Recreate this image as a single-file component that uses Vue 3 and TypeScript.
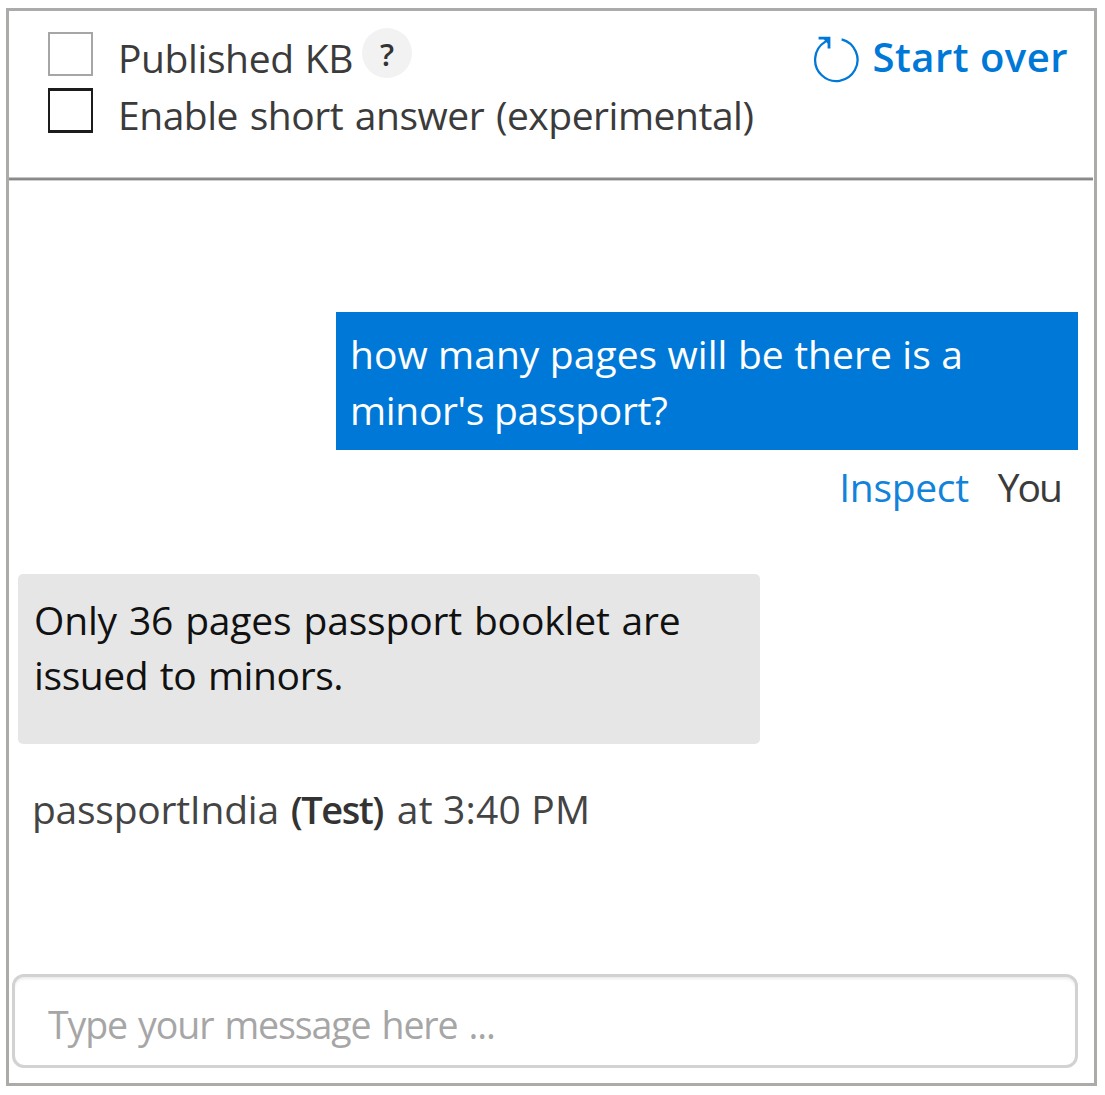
<script setup lang="ts">
import { ref } from 'vue'

interface Option {
  id: string
  label: string
  help: boolean
  muted: boolean
}

const options: Option[] = [
  { id: 'published', label: 'Published KB', help: true, muted: true },
  { id: 'short', label: 'Enable short answer (experimental)', help: false, muted: false },
]
const draft = ref('')
</script>

<template>
  <main class="panel">
    <header class="header">
      <div class="options">
        <div v-for="o in options" :key="o.id" class="option" :class="{ muted: o.muted }">
          <span class="box" role="checkbox" aria-checked="false"></span>
          <span class="label" :class="o.id">{{ o.label }}</span>
          <span v-if="o.help" class="help">?</span>
        </div>
      </div>
      <a class="restart">
        <svg class="restart-icon" width="48" height="48" viewBox="0 0 48 48" fill="none" stroke="#0078d7">
          <path d="M29.6 4.3A21.2 21.2 0 1 1 13 6.9L17 3.5" stroke-width="2.3" />
          <path d="M6.6 3.2H17V13.4" stroke-width="2.8" />
          <path d="M11 3H17V9.5L14 7Z" fill="#0078d7" stroke="none" />
        </svg>
        <span class="restart-text">Start over</span>
      </a>
    </header>
    <div class="divider"></div>

    <section class="chat">
      <div class="bubble user">
        <div class="u1">how many pages will be there is a</div>
        <div class="u2">minor's passport?</div>
      </div>
      <div class="meta user-meta"><a class="inspect">Inspect</a><span class="you">You</span></div>
      <div class="bubble bot">
        <div class="b1">Only 36 pages passport booklet are</div>
        <div class="b2">issued to minors.</div>
      </div>
      <div class="meta bot-meta">
        <span class="name">passportIndia</span><span class="test">(Test)</span><span class="time">at 3:40 PM</span>
      </div>
    </section>

    <input v-model="draft" class="message" placeholder="Type your message here ..." />
  </main>
</template>

<style scoped>
.panel {
  box-sizing: border-box;
  width: 1091px;
  height: 1078px;
  margin: 8px 0 0 6px;
  border: 3px solid #adaaaa;
  background: #fff;
  display: flex;
  flex-direction: column;
  font: 39px/56px "Open Sans", "Noto Sans", sans-serif;
  color: #3b3b3b;
  white-space: nowrap;
}
.header {
  height: 166px;
  display: flex;
  justify-content: space-between;
  align-items: flex-start;
  flex: none;
}
.options {
  padding: 19px 0 0 39px;
}
.option {
  display: flex;
  align-items: flex-start;
  height: 57px;
}
.box {
  box-sizing: border-box;
  width: 45px;
  height: 45px;
  margin: 1px 25px 0 0;
  border: solid #1c1c1c;
  border-width: 3px 2px;
}
.muted .box {
  border: 2px solid #a6a6a6;
  margin-top: 2px;
  height: 44px;
}
.label.published {
  letter-spacing: -0.4px;
  word-spacing: 1.5px;
}
.label.short {
  letter-spacing: -0.47px;
  word-spacing: 2px;
}
.help {
  width: 50px;
  height: 50px;
  margin: -2px 0 0 9px;
  border-radius: 50%;
  background: #f2f2f2;
  color: #333;
  font-size: 31px;
  line-height: 53px;
  font-weight: 600;
  text-align: center;
}
.restart {
  display: flex;
  align-items: flex-start;
  color: #0078d7;
  padding: 17px 26px 0 0;
}
.restart-icon {
  margin: 7px 12px 0 0;
}
.restart-text {
  font-size: 40px;
  line-height: 57px;
  font-weight: 600;
  letter-spacing: 0.5px;
}
.divider {
  flex: none;
  width: 1084px;
  height: 4px;
  background: linear-gradient(#c4c4c4 25%, #8e8e8e 25% 50%, #858585 50% 75%, #cfcfcf 75%);
}
.chat {
  height: 793px;
  flex: none;
  display: flex;
  flex-direction: column;
  padding-top: 131px;
  box-sizing: border-box;
}
.bubble {
  box-sizing: border-box;
  width: 742px;
  line-height: 55px;
}
.user {
  height: 138px;
  align-self: flex-end;
  margin-right: 16px;
  padding: 14px 0 0 14px;
  line-height: 56px;
  background: #0078d7;
  color: #fff;
}
.u1 {
  letter-spacing: 0.02px;
  word-spacing: 0.3px;
}
.u2 {
  letter-spacing: -0.33px;
}
.meta {
  display: flex;
}
.user-meta {
  justify-content: flex-end;
  padding: 9px 33px 0 0;
}
.inspect {
  color: #1283da;
  letter-spacing: -0.3px;
  margin-right: 29px;
}
.you {
  letter-spacing: -2px;
}
.bot {
  height: 170px;
  margin: 59px 0 0 9px;
  padding: 18px 0 0 16px;
  border-radius: 5px;
  background: #e6e6e6;
  color: #111;
}
.b1 {
  letter-spacing: -0.17px;
  word-spacing: 2px;
}
.b2 {
  letter-spacing: -0.4px;
  word-spacing: 1.8px;
}
.bot-meta {
  padding: 37px 0 0 23px;
  color: #444;
}
.name {
  letter-spacing: -0.25px;
}
.test {
  margin-left: 12px;
  font-size: 38px;
  font-weight: 600;
  letter-spacing: -1.5px;
  color: #333;
}
.time {
  margin-left: 14px;
  letter-spacing: 0.2px;
}
.message {
  box-sizing: border-box;
  flex: none;
  width: 1066px;
  height: 94px;
  margin: 0 0 0 3px;
  padding: 7px 33px 0;
  border: 3px solid #d2d2d2;
  border-radius: 12px;
  background: #fff;
  box-shadow: inset 0 3px 3px -1px #ececec;
  font: 37.5px "Open Sans", "Noto Sans", sans-serif;
  letter-spacing: -1.1px;
  word-spacing: 2.4px;
  outline: none;
}
.message::placeholder {
  color: #a6a6a6;
  opacity: 1;
}
</style>
